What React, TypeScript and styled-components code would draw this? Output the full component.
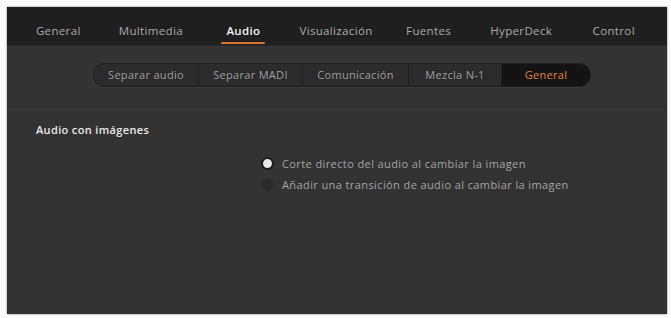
import React from "react";
import styled, { createGlobalStyle } from "styled-components";

const Global = createGlobalStyle`
  html, body { margin: 0; padding: 0; background: #ffffff; }
  body { font-family: "Open Sans", "Noto Sans", sans-serif; }
`;

const Page = styled.div`
  width: 671px;
  height: 318px;
  padding: 7px 4px 4px 7px;
  box-sizing: border-box;
  background: #fff;
`;

const Panel = styled.div`
  width: 660px;
  height: 307px;
  background: #333333;
  box-shadow: 0 0 2px rgba(0, 0, 0, 0.55);
  display: flex;
  flex-direction: column;
`;

const TabBar = styled.div`
  height: 38px;
  background: #1f1f1f;
  display: flex;
  padding: 0 7px 0 5px;
  border-bottom: 1px solid #2a2a2a;
`;

const Tab = styled.div<{ $active?: boolean }>`
  flex: 1;
  display: flex;
  align-items: flex-end;
  justify-content: center;
  position: relative;
  font-size: 11.5px;
  letter-spacing: 0.35px;
  line-height: 16px;
  color: ${(p) => (p.$active ? "#f2f2f2" : "#a9a9a9")};
  font-weight: ${(p) => (p.$active ? 600 : 400)};
  padding-bottom: 6px;
  box-sizing: border-box;
`;

const Underline = styled.span`
  position: absolute;
  left: 50%;
  bottom: 1px;
  transform: translateX(-50%);
  width: 44px;
  height: 2px;
  border-radius: 1px;
  background: #d9742e;
`;

const SubRow = styled.div`
  display: flex;
  justify-content: flex-start;
  padding: 17px 0 0 86px;
`;

const Segmented = styled.div`
  display: flex;
  height: 22px;
  border-radius: 11px;
  background: #2b2b2b;
  border: 1px solid #1e1e1e;
  overflow: hidden;
  box-shadow: 0 1px 0 rgba(255, 255, 255, 0.04);
`;

const Segment = styled.div<{ $w: number; $active?: boolean }>`
  width: ${(p) => p.$w}px;
  display: flex;
  align-items: center;
  justify-content: center;
  font-size: 11px;
  letter-spacing: 0.3px;
  line-height: 14px;
  padding-bottom: 1px;
  color: ${(p) => (p.$active ? "#e0813e" : "#9c9c9c")};
  background: ${(p) => (p.$active ? "#141414" : "transparent")};
  border-left: 1px solid #1f1f1f;
  &:first-child { border-left: none; }
`;

const Divider = styled.div`
  margin-top: 22px;
  height: 1px;
  background: #393939;
`;

const Section = styled.div`
  padding: 12px 0 0 29px;
`;

const SectionTitle = styled.div`
  font-size: 11px;
  letter-spacing: 0.35px;
  font-weight: 600;
  color: #e8e8e8;
`;

const Options = styled.div`
  display: flex;
  flex-direction: column;
  gap: 5px;
  padding: 18px 0 0 254px;
`;

const Option = styled.div`
  display: flex;
  align-items: center;
  gap: 8px;
  font-size: 11px;
  letter-spacing: 0.4px;
  color: #a2a2a2;
  height: 16px;
`;

const Radio = styled.span<{ $on?: boolean }>`
  width: 9px;
  height: 9px;
  border-radius: 50%;
  background: ${(p) => (p.$on ? "#e6e6e6" : "#2a2a2a")};
  border: 2px solid ${(p) => (p.$on ? "#1c1c1c" : "#2c2c2c")};
  box-sizing: content-box;
  flex: none;
`;

const tabs = ["General", "Multimedia", "Audio", "Visualización", "Fuentes", "HyperDeck", "Control"];
const subs: [string, number][] = [
  ["Separar audio", 104],
  ["Separar MADI", 103],
  ["Comunicación", 105],
  ["Mezcla N-1", 92],
  ["General", 88],
];

export default function App() {
  return (
    <>
      <Global />
      <Page>
        <Panel>
          <TabBar>
            {tabs.map((t) => (
              <Tab key={t} $active={t === "Audio"}>
                {t}
                {t === "Audio" && <Underline />}
              </Tab>
            ))}
          </TabBar>
          <SubRow>
            <Segmented>
              {subs.map(([s, w], i) => (
                <Segment key={s} $w={w} $active={i === 4}>
                  {s}
                </Segment>
              ))}
            </Segmented>
          </SubRow>
          <Divider />
          <Section>
            <SectionTitle>Audio con imágenes</SectionTitle>
          </Section>
          <Options>
            <Option>
              <Radio $on />
              Corte directo del audio al cambiar la imagen
            </Option>
            <Option>
              <Radio />
              Añadir una transición de audio al cambiar la imagen
            </Option>
          </Options>
        </Panel>
      </Page>
    </>
  );
}
